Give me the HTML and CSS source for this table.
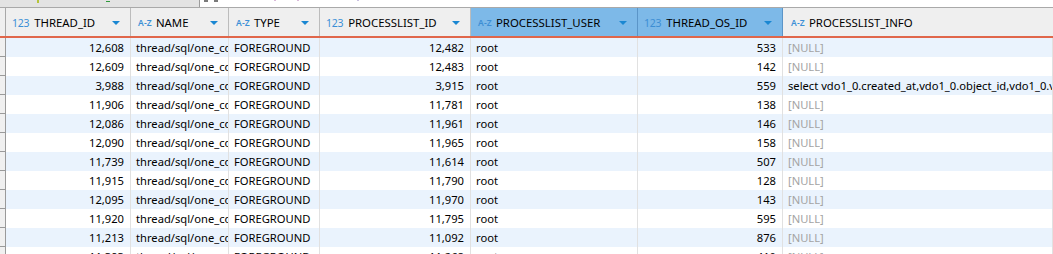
FILE: index.html
```html
<!DOCTYPE html>
<html lang="en">
<head>
<meta charset="utf-8">
<title>performance_schema.threads</title>
<link rel="stylesheet" href="styles.css">
</head>
<body>
<div class="topbar">
  <div class="tb-left">
    <span class="mk mk-y"></span>
    <span class="mk mk-g"></span>
  </div>
  <div class="tb-right">
    <span class="mk mk-d1"></span>
    <span class="mk mk-d2"></span>
    <span class="mk mk-p1"></span>
    <span class="mk mk-p2"></span>
    <span class="mk mk-p3"></span>
  </div>
</div>
<div class="grid">
  <div class="row head">
    <div class="gut"></div>
    <div class="hc"><span class="ico num">123</span><span class="title">THREAD_ID</span><span class="arrow"></span></div>
    <div class="hc"><span class="ico az">A-Z</span><span class="title">NAME</span><span class="arrow"></span></div>
    <div class="hc"><span class="ico az">A-Z</span><span class="title">TYPE</span><span class="arrow"></span></div>
    <div class="hc"><span class="ico num">123</span><span class="title">PROCESSLIST_ID</span><span class="arrow"></span></div>
    <div class="hc sel"><span class="ico az">A-Z</span><span class="title">PROCESSLIST_USER</span><span class="arrow"></span></div>
    <div class="hc sel"><span class="ico num">123</span><span class="title">THREAD_OS_ID</span><span class="arrow"></span></div>
    <div class="hc last"><span class="ico az">A-Z</span><span class="title">PROCESSLIST_INFO</span></div>
  </div>
  <div class="row odd"><div class="gut"></div><div class="c n">12,608</div><div class="c">thread/sql/one_connection</div><div class="c">FOREGROUND</div><div class="c n">12,482</div><div class="c">root</div><div class="c n">533</div><div class="c null">[NULL]</div></div>
  <div class="row"><div class="gut"></div><div class="c n">12,609</div><div class="c">thread/sql/one_connection</div><div class="c">FOREGROUND</div><div class="c n">12,483</div><div class="c">root</div><div class="c n">142</div><div class="c null">[NULL]</div></div>
  <div class="row odd"><div class="gut"></div><div class="c n">3,988</div><div class="c">thread/sql/one_connection</div><div class="c">FOREGROUND</div><div class="c n">3,915</div><div class="c">root</div><div class="c n">559</div><div class="c">select vdo1_0.created_at,vdo1_0.object_id,vdo1_0.value from vdo1_0</div></div>
  <div class="row"><div class="gut"></div><div class="c n">11,906</div><div class="c">thread/sql/one_connection</div><div class="c">FOREGROUND</div><div class="c n">11,781</div><div class="c">root</div><div class="c n">138</div><div class="c null">[NULL]</div></div>
  <div class="row odd"><div class="gut"></div><div class="c n">12,086</div><div class="c">thread/sql/one_connection</div><div class="c">FOREGROUND</div><div class="c n">11,961</div><div class="c">root</div><div class="c n">146</div><div class="c null">[NULL]</div></div>
  <div class="row"><div class="gut"></div><div class="c n">12,090</div><div class="c">thread/sql/one_connection</div><div class="c">FOREGROUND</div><div class="c n">11,965</div><div class="c">root</div><div class="c n">158</div><div class="c null">[NULL]</div></div>
  <div class="row odd"><div class="gut"></div><div class="c n">11,739</div><div class="c">thread/sql/one_connection</div><div class="c">FOREGROUND</div><div class="c n">11,614</div><div class="c">root</div><div class="c n">507</div><div class="c null">[NULL]</div></div>
  <div class="row"><div class="gut"></div><div class="c n">11,915</div><div class="c">thread/sql/one_connection</div><div class="c">FOREGROUND</div><div class="c n">11,790</div><div class="c">root</div><div class="c n">128</div><div class="c null">[NULL]</div></div>
  <div class="row odd"><div class="gut"></div><div class="c n">12,095</div><div class="c">thread/sql/one_connection</div><div class="c">FOREGROUND</div><div class="c n">11,970</div><div class="c">root</div><div class="c n">143</div><div class="c null">[NULL]</div></div>
  <div class="row"><div class="gut"></div><div class="c n">11,920</div><div class="c">thread/sql/one_connection</div><div class="c">FOREGROUND</div><div class="c n">11,795</div><div class="c">root</div><div class="c n">595</div><div class="c null">[NULL]</div></div>
  <div class="row odd"><div class="gut"></div><div class="c n">11,213</div><div class="c">thread/sql/one_connection</div><div class="c">FOREGROUND</div><div class="c n">11,092</div><div class="c">root</div><div class="c n">876</div><div class="c null">[NULL]</div></div>
  <div class="row"><div class="gut"></div><div class="c n">11,393</div><div class="c">thread/sql/one_connection</div><div class="c">FOREGROUND</div><div class="c n">11,268</div><div class="c">root</div><div class="c n">410</div><div class="c null">[NULL]</div></div>
</div>
</body>
</html>
```
FILE: styles.css
```css
* { box-sizing: border-box; }
html, body {
  margin: 0;
  padding: 0;
  background: #ffffff;
  overflow: hidden;
}
body {
  font-family: "Noto Sans", "Open Sans", sans-serif;
  font-size: 11.2px;
  color: #000;
  width: 1053px;
  height: 254px;
}

/* top strip (remnant of the toolbar above the grid) */
.topbar {
  display: flex;
  height: 7px;
}
.tb-left {
  width: 200px;
  background: #e3e3e3;
  border-right: 1px solid #9c9c9c;
  display: flex;
  align-items: flex-start;
}
.tb-right {
  flex: 1;
  display: flex;
  align-items: flex-start;
}
.mk { display: block; }
.mk-y { width: 2px; height: 3px; background: #b5c43a; margin-left: 37px; }
.mk-g { width: 4px; height: 1px; background: #2f9a3c; margin-left: 67px; margin-top: 1px; }
.mk-d1 { width: 4px; height: 2px; background: #7a7a7a; margin-left: 4px; }
.mk-d2 { width: 4px; height: 2px; background: #7a7a7a; margin-left: 6px; }
.mk-p1 { width: 2px; height: 1px; background: #d9b9d9; margin-left: 56px; }
.mk-p2 { width: 2px; height: 1px; background: #d9b9d9; margin-left: 21px; }
.mk-p3 { width: 2px; height: 1px; background: #c9c0e0; margin-left: 58px; }

/* grid */
.grid {
  --cols: 6px 125px 98px 91px 151px 167px 145px 1fr;
  border-top: 1px solid #a9a9a9;
}
.row {
  display: grid;
  grid-template-columns: var(--cols);
  height: 19px;
  background: #ffffff;
}
.row.odd { background: #eaf3fd; }

.row.head {
  height: 30px;
  background: #efefef;
  border-bottom: 2px solid #e0664a;
}

.gut {
  background: #f0f0f0;
  border-right: 1px solid #9a9a9a;
  border-bottom: 1px solid #9a9a9a;
}
.head .gut {
  background: #efefef;
  border-bottom: none;
  border-right: 1px solid #a8a8a8;
}

.hc {
  display: flex;
  align-items: center;
  padding: 1px 0 0 6px;
  border-right: 1px solid #bcbcbc;
  white-space: nowrap;
  overflow: hidden;
}
.hc.sel {
  background: #7db9e8;
  border-right: 1px solid #5b95c8;
}
.hc.last { border-right: none; padding-left: 7px; }

.ico {
  color: #3b8fd6;
  margin-right: 5px;
}
.ico.num {
  font-size: 10.5px;
  letter-spacing: -0.3px;
}
.ico.az {
  font-size: 8.5px;
  font-weight: 600;
  letter-spacing: 0.2px;
  margin-left: 1px;
  margin-right: 4px;
}
.sel .ico { color: #3c8ed4; }

.title {
  font-size: 11.4px;
}
.arrow {
  margin-left: auto;
  margin-right: 10px;
  width: 0;
  height: 0;
  border-left: 4px solid transparent;
  border-right: 4px solid transparent;
  border-top: 4px solid #1a87d2;
}

.c {
  line-height: 18px;
  padding: 1px 5px 0;
  white-space: nowrap;
  overflow: hidden;
  border-right: 1px solid #e1e1e1;
}
.c.n {
  text-align: right;
  padding-right: 6px;
}
.c.null { color: #a3a3a3; }
```
